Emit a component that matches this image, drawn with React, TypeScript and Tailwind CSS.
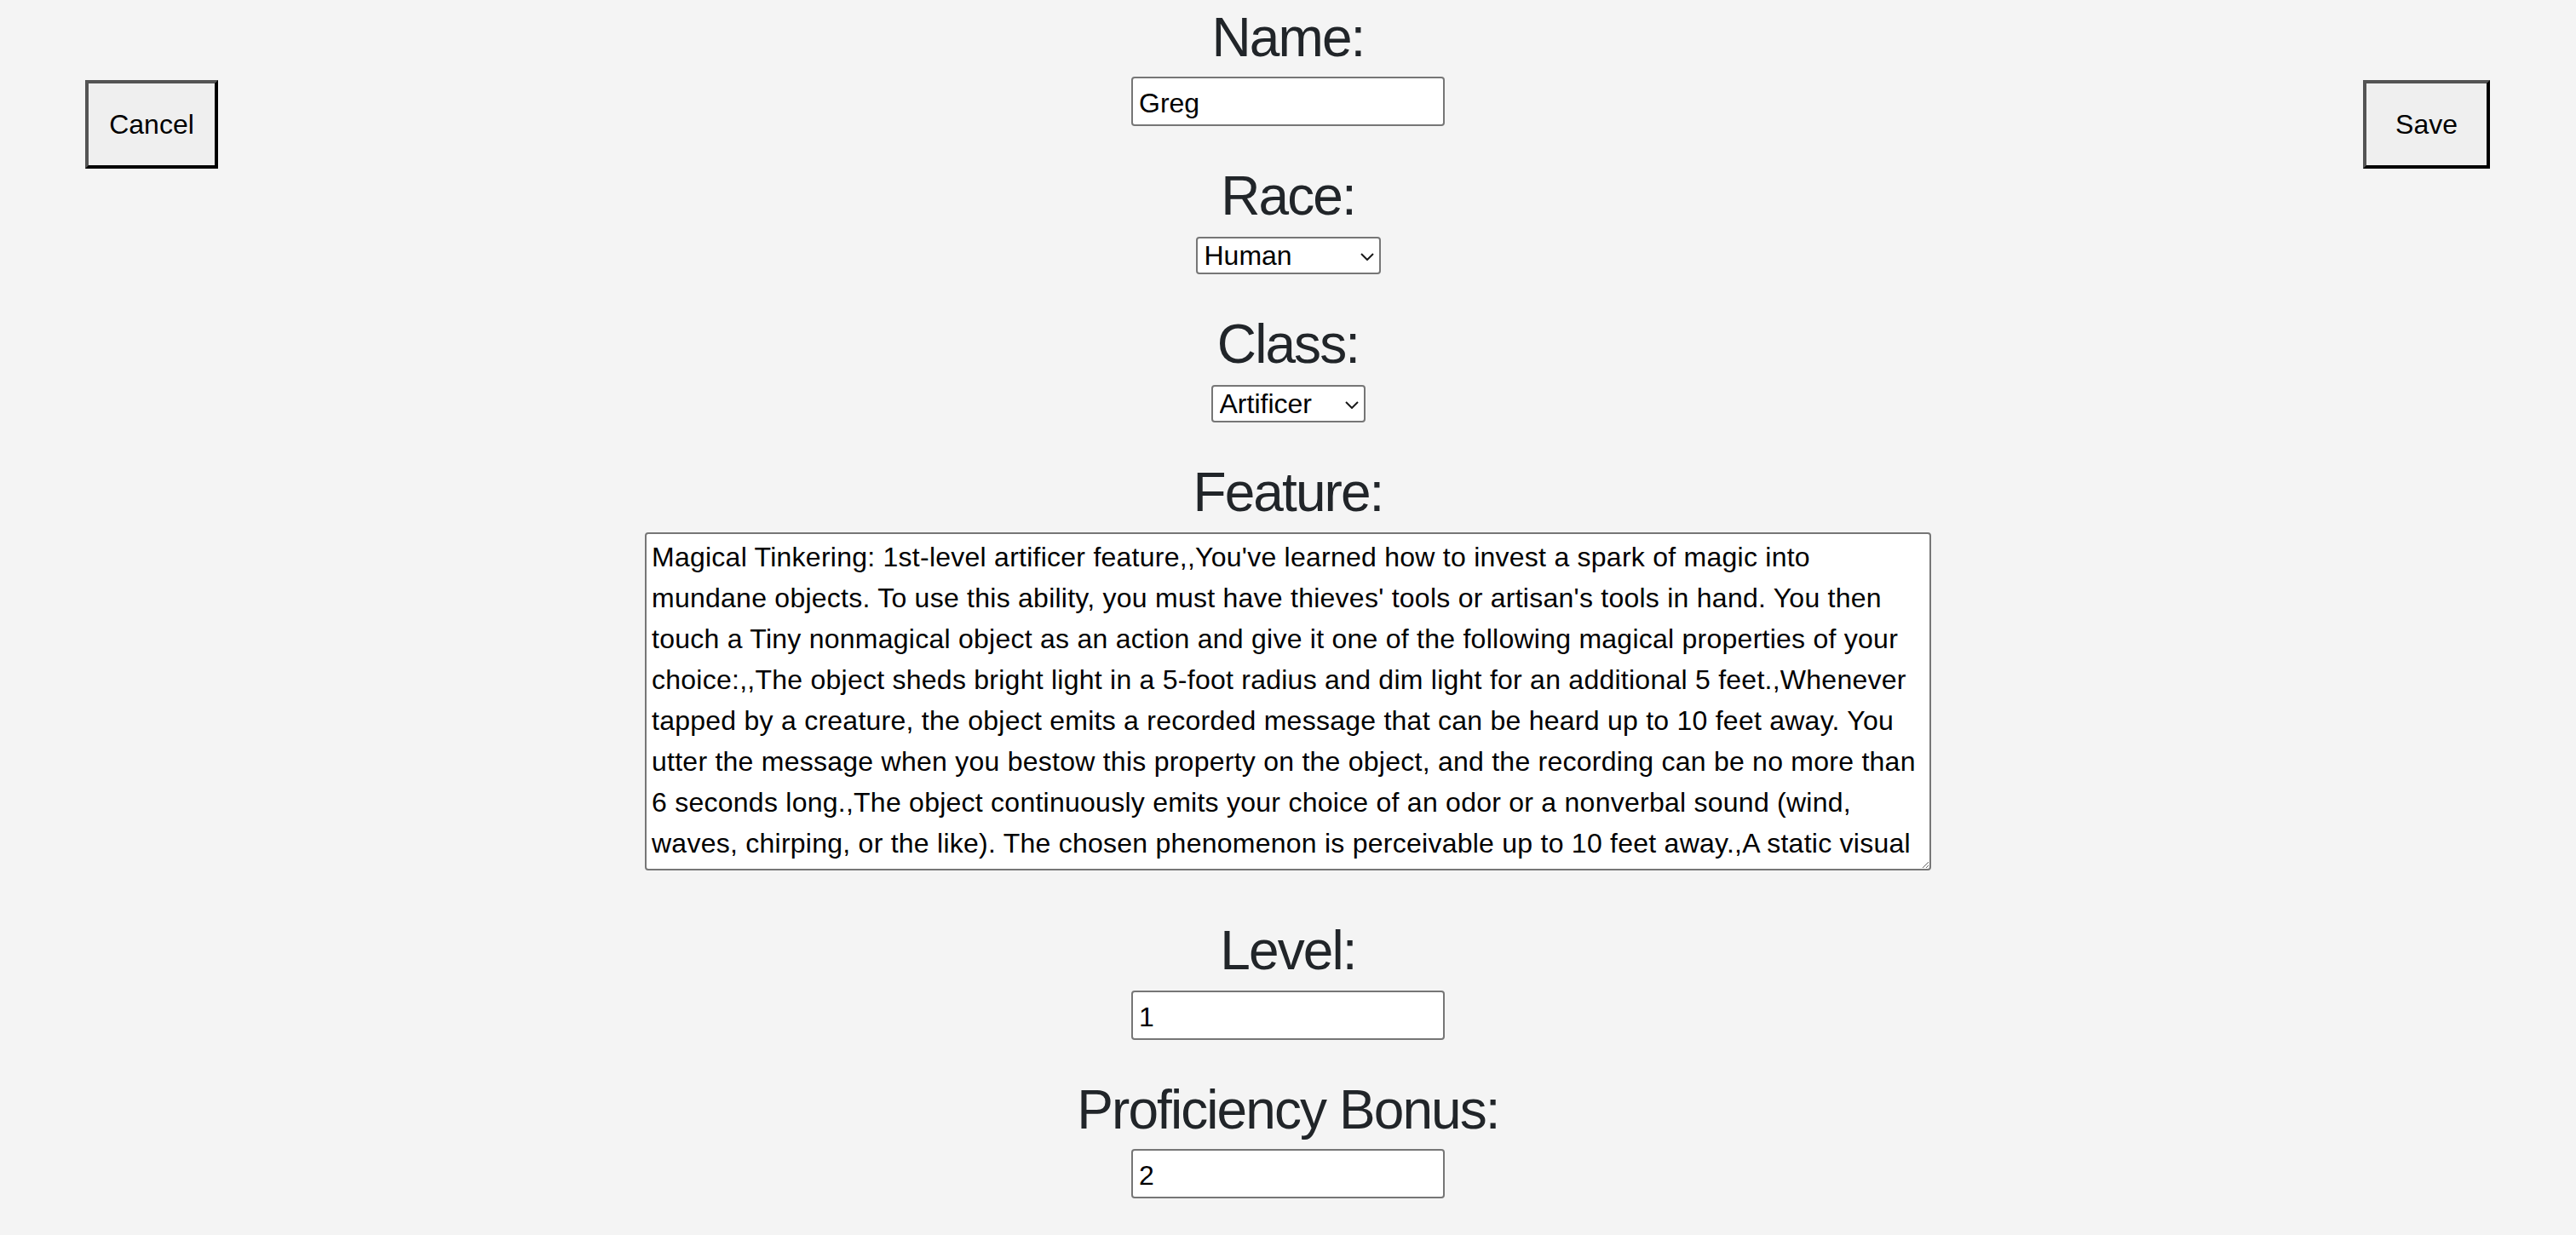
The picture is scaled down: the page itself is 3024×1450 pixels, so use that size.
import React from "react";

const featureText =
  "Magical Tinkering: 1st-level artificer feature,,You've learned how to invest a spark of magic into\n" +
  "mundane objects. To use this ability, you must have thieves' tools or artisan's tools in hand. You then\n" +
  "touch a Tiny nonmagical object as an action and give it one of the following magical properties of your\n" +
  "choice:,,The object sheds bright light in a 5-foot radius and dim light for an additional 5 feet.,Whenever\n" +
  "tapped by a creature, the object emits a recorded message that can be heard up to 10 feet away. You\n" +
  "utter the message when you bestow this property on the object, and the recording can be no more than\n" +
  "6 seconds long.,The object continuously emits your choice of an odor or a nonverbal sound (wind,\n" +
  "waves, chirping, or the like). The chosen phenomenon is perceivable up to 10 feet away.,A static visual\n" +
  "effect appears on one of the object's surfaces. This effect can be a picture, up to 25 words of text, lines and shapes, or a mixture of these elements, as you like.,,The chosen property lasts indefinitely. As an action, you can touch the object and end the property early.";

function Heading({ children, className }: { children: React.ReactNode; className: string }) {
  return (
    <h2
      className={
        "h-[64px] text-[64px] leading-[64px] font-normal tracking-[-0.03em] text-[#212529] whitespace-nowrap " +
        className
      }
    >
      {children}
    </h2>
  );
}

function Chevron() {
  return (
    <svg
      className="pointer-events-none absolute right-[8px] top-[19px]"
      width="16"
      height="9"
      viewBox="0 0 16 9"
      fill="none"
    >
      <polyline points="1,1 8,8 15,1" stroke="#1a1a1a" strokeWidth="2" fill="none" />
    </svg>
  );
}

function TextInput({ value, className }: { value: string; className: string }) {
  return (
    <input
      type="text"
      defaultValue={value}
      className={
        "block w-[368px] h-[58px] border-2 border-[#767676] rounded-[4px] bg-white px-[7px] pt-[5px] pb-[1px] text-[32px] leading-[48px] text-black outline-none " +
        className
      }
    />
  );
}

export default function App() {
  return (
    <div className="min-h-screen w-full bg-[#f4f4f4] font-['Liberation_Sans',Arial,sans-serif] text-black">
      <div className="grid grid-cols-[1fr_auto_1fr]">
        <div className="flex justify-start pl-[100px] pt-[94px]">
          <button className="w-[156px] h-[104px] bg-[#efefef] border-4 border-t-[#545454] border-l-[#545454] border-b-black border-r-black text-[32px] leading-[48px] text-black">
            Cancel
          </button>
        </div>

        <div className="flex flex-col items-center pt-[12px] pb-[40px]">
          <Heading className="">Name:</Heading>
          <TextInput value="Greg" className="mt-[14px]" />

          <Heading className="mt-[50px]">Race:</Heading>
          <div className="relative mt-[16px]">
            <select
              defaultValue="Human"
              className="block appearance-none w-[217px] h-[44px] border-2 border-[#767676] rounded-[4px] bg-white pl-[8px] pr-[28px] text-[32px] leading-[40px] text-black outline-none"
            >
              <option>Human</option>
              <option>Elf</option>
              <option>Dwarf</option>
            </select>
            <Chevron />
          </div>

          <Heading className="mt-[50px]">Class:</Heading>
          <div className="relative mt-[16px]">
            <select
              defaultValue="Artificer"
              className="block appearance-none w-[181px] h-[44px] border-2 border-[#767676] rounded-[4px] bg-white pl-[8px] pr-[28px] text-[32px] leading-[40px] text-black outline-none"
            >
              <option>Artificer</option>
              <option>Barbarian</option>
              <option>Bard</option>
            </select>
            <Chevron />
          </div>

          <Heading className="mt-[50px]">Feature:</Heading>
          <textarea
            defaultValue={featureText}
            className="block mt-[15px] w-[1510px] h-[397px] border-2 border-[#767676] rounded-[4px] bg-white pl-[6px] pr-[2px] pt-[3px] pb-[3px] text-[32px] leading-[48px] tracking-[0.25px] text-black overflow-hidden outline-none resize"
          />

          <Heading className="mt-[62px]">Level:</Heading>
          <TextInput value="1" className="mt-[15px]" />

          <Heading className="mt-[50px]">Proficiency Bonus:</Heading>
          <TextInput value="2" className="mt-[14px]" />
        </div>

        <div className="flex justify-end pr-[101px] pt-[94px]">
          <button className="w-[149px] h-[104px] bg-[#efefef] border-4 border-t-[#545454] border-l-[#545454] border-b-black border-r-black text-[32px] leading-[48px] text-black">
            Save
          </button>
        </div>
      </div>
    </div>
  );
}
